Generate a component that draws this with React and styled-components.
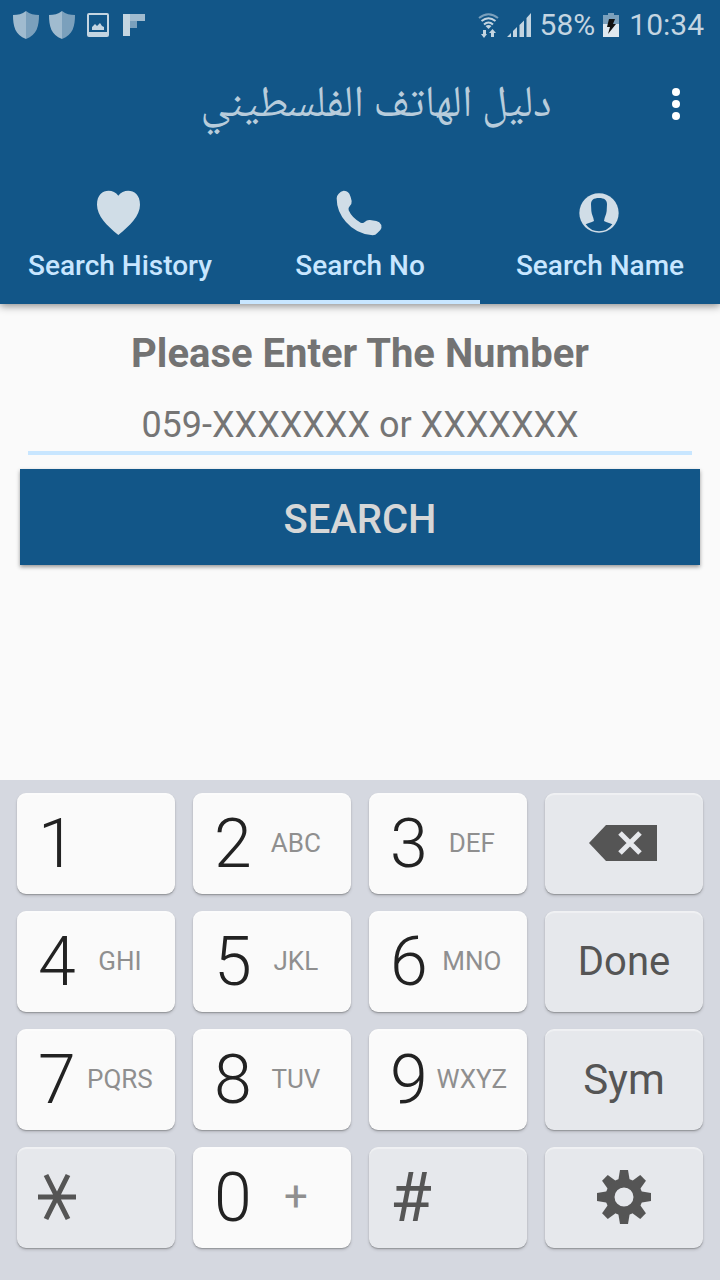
import { useState } from "react";
import styled, { createGlobalStyle, css } from "styled-components";

const GlobalStyle = createGlobalStyle`
    *, *::before, *::after {
        box-sizing: border-box;
    }

    body {
        margin: 0;
        background: #fafafa;
        font-family: Roboto, "Noto Sans", sans-serif;
    }

    button, input {
        margin: 0;
        font-family: inherit;
    }
`

const Screen = styled.div`
    display: flex;
    flex-direction: column;

    min-height: 100vh;
`

const Header = styled.header`
    color: #c8e6ff;
    background: #125688;
    box-shadow: 0 2px 8px rgba(0, 0, 0, 0.45);
`

    const StatusBar = styled.div`
        display: flex;
        align-items: center;
        justify-content: space-between;

        height: 50px;
        padding: 0 16px 0 13px;
    `

        const StatusGroup = styled.div`
            display: flex;
            align-items: center;
            gap: ${({ $gap }) => $gap}px;
        `

        const StatusText = styled.span`
            color: #c4d5e1;
            font-size: 30px;
            line-height: 32px;
        `

    const Toolbar = styled.div`
        display: flex;
        align-items: center;

        height: 108px;
        padding: 0 8px 0 112px;
    `

        const Title = styled.h1`
            flex: 1;
            margin: 0;
            padding-top: 6px;

            color: #b8ccdb;
            font-family: "Noto Naskh Arabic", "DejaVu Sans Condensed", "DejaVu Sans", sans-serif;
            font-size: 44px;
            font-weight: 400;
            line-height: 56px;
            text-align: center;
            white-space: nowrap;
        `

        const MenuButton = styled.button`
            display: flex;
            align-items: center;
            justify-content: center;

            width: 72px;
            height: 72px;
            padding: 0;

            border: 0;
            background: none;
            cursor: pointer;
        `

    const Tabs = styled.div`
        display: grid;
        grid-template-columns: repeat(3, 1fr);
    `

        const Tab = styled.button`
            display: flex;
            flex-direction: column;
            align-items: center;
            gap: 13px;

            padding: 31px 0 18px;

            border: 0;
            border-bottom: 4px solid ${({ $active }) => ($active ? "#c8e6ff" : "transparent")};
            background: none;
            color: inherit;
            font-size: 28px;
            font-weight: 500;
            line-height: 32px;
            cursor: pointer;
        `

const SearchForm = styled.form`
    flex: 1;
    display: flex;
    flex-direction: column;

    padding: 26px 20px;
`

    const FormLabel = styled.label`
        color: #737373;
        font-size: 40px;
        font-weight: 700;
        line-height: 48px;
        text-align: center;
    `

    const NumberInput = styled.input`
        min-width: 0;
        margin: 23px 8px 14px;
        padding: 2px 0 4px;

        border: 0;
        border-bottom: 4px solid #c8e6ff;
        border-radius: 0;
        outline: 0;
        background: none;
        color: #212121;
        font-size: 36px;
        line-height: 44px;
        text-align: center;

        &::placeholder {
            color: #757575;
            opacity: 1;
        }
    `

    const SearchButton = styled.button`
        padding: 27px 0 21px;

        border: 0;
        background: #125688;
        box-shadow: 0 2px 4px rgba(0, 0, 0, 0.4);
        color: #d6d7d7;
        font-size: 40px;
        font-weight: 500;
        line-height: 48px;
        cursor: pointer;
    `

const Keypad = styled.div`
    display: grid;
    grid-template-columns: repeat(4, 1fr);
    gap: 17px 18px;

    padding: 13px 17px 32px;

    background: #d5d8e0;
`

    const Key = styled.button`
        display: flex;
        align-items: center;
        justify-content: center;

        height: 101px;
        padding: 0;

        border: 0;
        border-radius: 9px;
        background: #e6e8ec;
        box-shadow: 0 1px 1px #95979c, 0 2px 3px rgba(0, 0, 0, 0.15), inset 0 2px 1px rgba(255, 255, 255, 0.4);
        color: #555555;
        font-size: ${({ $large }) => ($large ? 42 : 40)}px;
        line-height: 48px;
        cursor: pointer;

        & svg {
            margin-bottom: 2px;
        }

        ${({ $split }) => $split && css`
            justify-content: flex-start;
            padding: 0 11px 0 21px;
        `}

        ${({ $digit }) => $digit && css`
            background: #fafafa;
            color: #222222;
        `}
    `

        const KeyMain = styled.span`
            font-size: 68px;
            font-weight: ${({ $light }) => ($light ? 300 : 400)};
            line-height: 80px;
        `

        const KeyLetters = styled.span`
            flex: 1;
            padding-bottom: 2px;

            color: #8f8f8f;
            font-size: ${({ $large }) => ($large ? 42 : 26)}px;
            line-height: 32px;
            text-align: center;
        `

const ShieldIcon = () => (
    <svg width="26" height="28" viewBox="0 0 26 28" aria-hidden="true">
        <path d="M13 0C9 3 5 4 0 4C0 15 2 24 13 28Z" fill="#a0bbcf" />
        <path d="M13 0C17 3 21 4 26 4C26 15 24 24 13 28Z" fill="#7ba0bc" />
    </svg>
)

const PictureIcon = () => (
    <svg width="26" height="24" viewBox="-2 0 26 24" aria-hidden="true">
        <path fillRule="evenodd" d="M2 0H20Q22 0 22 2V22Q22 24 20 24H2Q0 24 0 22V2Q0 0 2 0ZM2 2V19H20V2Z" fill="#c4d5e1" />
        <path d="M5 17V14L8 11L10 13L13 10L15 13L17 14V17Z" fill="#c4d5e1" />
    </svg>
)

const FlipboardIcon = () => (
    <svg width="26" height="22" viewBox="-2 0 26 22" aria-hidden="true">
        <path d="M0 0H7V22H0Z" fill="#c4d5e1" />
        <path d="M7 0H22V7H7Z" fill="#a0bbcf" />
        <path d="M7 7H14V14H7Z" fill="#7ba0bc" />
    </svg>
)

const WifiIcon = () => (
    <svg width="21" height="25" viewBox="0 0 21 25" fill="none" aria-hidden="true">
        <path d="M1 5Q10.500 -2.500 20 5" stroke="#7ba0bc" strokeWidth="2" />
        <path d="M3.500 8Q10.500 2.500 17.500 8M6 11.500Q10.500 7.500 15 11.500" stroke="#c4d5e1" strokeWidth="2" />
        <path d="M7.500 13Q10.500 11 13.500 13L10.500 16Z" fill="#c4d5e1" />
        <path d="M5 17V21H3L6 25L9 21H8V17ZM13 24V20H11L14.500 16L18 20H16V24Z" fill="#c4d5e1" />
    </svg>
)

const SignalIcon = () => (
    <svg width="25" height="24" viewBox="0 0 25 24" fill="#c4d5e1" aria-hidden="true">
        <path d="M0 24L4 20V24ZM6 18L10 14V24H6ZM12.500 12L17 7.500V24H12.500ZM19.500 5L24 0V24H19.500Z" />
    </svg>
)

const BatteryIcon = () => (
    <svg width="18" height="24" viewBox="0 0 18 24" aria-hidden="true">
        <path d="M5 0H11V2H16V11H0V2H5Z" fill="#7ba0bc" />
        <path d="M0 11H16V24H0Z" fill="#dfe8ef" />
        <path d="M6 6H12L10 11H13L5 21L7 14H4Z" fill="#111111" />
    </svg>
)

const DotsIcon = () => (
    <svg width="8" height="32" viewBox="0 0 8 32" fill="#ffffff" aria-hidden="true">
        <circle cx="4" cy="4" r="4" />
        <circle cx="4" cy="16" r="4" />
        <circle cx="4" cy="28" r="4" />
    </svg>
)

const HeartIcon = () => (
    <svg width="48" height="48" viewBox="0 0 144 144" fill="#d0dde7" aria-hidden="true">
        <path d="M67 20C49 -4 3 0 3 47C3 80 32 109 67 138C102 109 132 80 132 47C132 0 85 -4 67 20Z" />
    </svg>
)

const PhoneIcon = () => (
    <svg width="48" height="48" viewBox="0 0 144 144" fill="#d0dde7" aria-hidden="true">
        <path d="M2 28Q2 20 8 14Q14 6 23 5Q34 5 40 14Q45 24 47 36Q48 46 41 52Q36 57 38 64Q48 87 74 101Q82 104 86 99Q93 92 102 93L121 96Q131 98 136 108Q138 116 133 123L124 132Q119 139 110 139Q62 136 30 99Q2 68 2 28Z" />
    </svg>
)

const PersonIcon = () => (
    <svg width="48" height="48" viewBox="0 0 144 144" aria-hidden="true">
        <circle cx="69" cy="72" r="59" fill="#d0dde7" />
        <path d="M69 27C85 27 93 33 93 46L92 66C91 77 86 83 84 96C92 101 102 102 109 106Q94 127 69 127Q44 127 29 106C36 102 46 101 54 96C52 83 47 77 46 66L45 46C45 33 53 27 69 27Z" fill="#125688" />
    </svg>
)

const BackspaceIcon = () => (
    <svg width="70" height="38" viewBox="0 0 70 38" aria-hidden="true">
        <path d="M0 19L17 1H68V37H17Z" fill="#555555" />
        <path d="M31 9L51 29M51 9L31 29" stroke="#e6e8ec" strokeWidth="5" />
    </svg>
)

const StarIcon = () => (
    <svg width="38" height="48" viewBox="0 0 38 48" stroke="#555555" strokeWidth="5" aria-hidden="true">
        <path d="M0 24H38M8 2L30 46M30 2L8 46" />
    </svg>
)

const GearIcon = () => (
    <svg width="54" height="54" viewBox="-27 -27 54 54" aria-hidden="true">
        {[0, 45, 90, 135, 180, 225, 270, 315].map((angle) => (
            <path key={angle} d="M-4 -27H4L6 -15H-6Z" fill="#555555" transform={`rotate(${angle})`} />
        ))}
        <circle r="14" fill="none" stroke="#555555" strokeWidth="9" />
    </svg>
)

const tabs = [
    { name: "Search History", Icon: HeartIcon },
    { name: "Search No", Icon: PhoneIcon },
    { name: "Search Name", Icon: PersonIcon },
]

const keys = [
    { main: "1" },
    { main: "2", letters: "ABC" },
    { main: "3", letters: "DEF" },
    { action: "Backspace", Icon: BackspaceIcon },
    { main: "4", letters: "GHI" },
    { main: "5", letters: "JKL" },
    { main: "6", letters: "MNO" },
    { action: "Done" },
    { main: "7", letters: "PQRS" },
    { main: "8", letters: "TUV" },
    { main: "9", letters: "WXYZ" },
    { action: "Sym" },
    { main: "*", Icon: StarIcon },
    { main: "0", letters: "+" },
    { main: "#" },
    { action: "Settings", Icon: GearIcon },
]

const App = () => {
    const [activeTab, setActiveTab] = useState("Search No")
    const [number, setNumber] = useState("")

    const pressKey = ({ main, action }) => {
        if (main) setNumber(number + main)
        if (action === "Backspace") setNumber(number.slice(0, -1))
    }

    return (
        <Screen>
            <GlobalStyle />
            <Header>
                <StatusBar>
                    <StatusGroup $gap={10}>
                        <ShieldIcon />
                        <ShieldIcon />
                        <PictureIcon />
                        <FlipboardIcon />
                    </StatusGroup>
                    <StatusGroup $gap={8}>
                        <WifiIcon />
                        <SignalIcon />
                        <StatusText>58%</StatusText>
                        <BatteryIcon />
                        <StatusText>10:34</StatusText>
                    </StatusGroup>
                </StatusBar>
                <Toolbar>
                    <Title lang="ar" dir="rtl">دليل الهاتف الفلسطيني</Title>
                    <MenuButton type="button" aria-label="Menu">
                        <DotsIcon />
                    </MenuButton>
                </Toolbar>
                <Tabs role="tablist">
                    {tabs.map(({ name, Icon }) => (
                        <Tab
                            key={name}
                            type="button"
                            role="tab"
                            aria-selected={activeTab === name}
                            $active={activeTab === name}
                            onClick={() => setActiveTab(name)}
                        >
                            <Icon />
                            {name}
                        </Tab>
                    ))}
                </Tabs>
            </Header>
            <SearchForm onSubmit={(event) => event.preventDefault()}>
                <FormLabel htmlFor="number">Please Enter The Number</FormLabel>
                <NumberInput
                    id="number"
                    type="tel"
                    placeholder="059-XXXXXXX or XXXXXXX"
                    value={number}
                    onChange={(event) => setNumber(event.target.value)}
                />
                <SearchButton type="submit">SEARCH</SearchButton>
            </SearchForm>
            <Keypad>
                {keys.map((item) => {
                    const { main, letters, action, Icon } = item
                    const isDigit = /\d/.test(main)
                    return (
                        <Key
                            key={main || action}
                            type="button"
                            aria-label={Icon ? main || action : undefined}
                            $digit={isDigit}
                            $split={Boolean(main)}
                            $large={action === "Sym"}
                            onClick={() => pressKey(item)}
                        >
                            {Icon ? <Icon /> : main ? <KeyMain $light={isDigit}>{main}</KeyMain> : action}
                            {letters && <KeyLetters $large={letters === "+"}>{letters}</KeyLetters>}
                        </Key>
                    )
                })}
            </Keypad>
        </Screen>
    )
}

export default App;
